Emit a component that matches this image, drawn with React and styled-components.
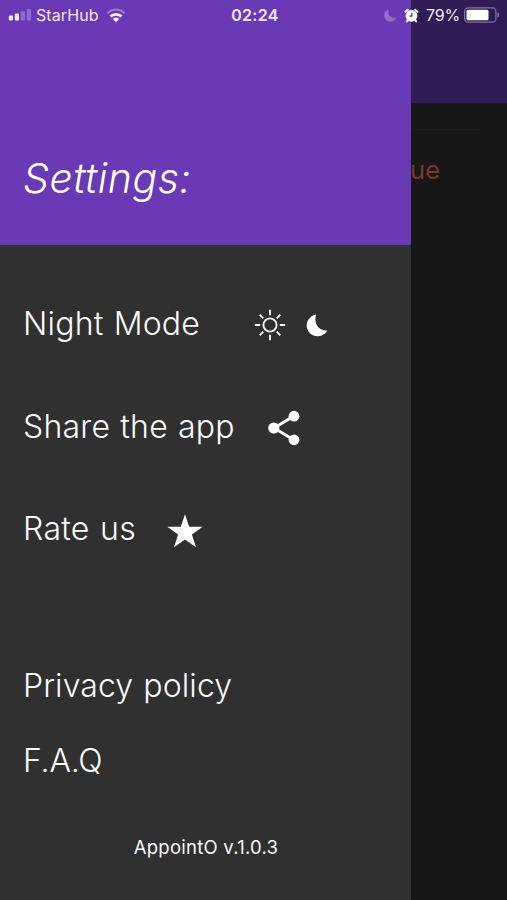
import React from 'react'
import styled, { createGlobalStyle } from 'styled-components'


const GlobalStyle = createGlobalStyle`
  * {
    box-sizing: border-box;
  }

  body {
    margin: 0;
    background: #171717;
    font-family: Inter, "Liberation Sans", sans-serif;
  }
`

const Screen = styled.div`
  position: relative;
  height: 900px;
  overflow: hidden;
  background: #171717;
`

const AppHeader = styled.div`
  height: 103px;
  background: #311b54;
`

const Divider = styled.div`
  height: 1px;
  margin: 26px 27px 0;
  background: #1b1b1b;
`

const Notice = styled.div`
  padding-right: 67px;
  margin-top: 25px;
  font-size: 25.5px;
  line-height: 30px;
  text-align: right;
  color: #793a27;
`

const Drawer = styled.aside`
  position: absolute;
  top: 0;
  left: 0;
  display: flex;
  flex-direction: column;
  width: 411px;
  height: 900px;
  background: #303030;
`

const DrawerHeader = styled.div`
  display: flex;
  align-items: flex-end;
  height: 245px;
  padding: 0 23px 42px;
  background: #6a39b5;
`

const Title = styled.h1`
  margin: 0;
  font-size: 41px;
  font-style: italic;
  font-weight: 320;
  line-height: 50px;
  letter-spacing: ${props => props.$spacing || 0}px;
  color: #fff;
`

const Menu = styled.div`
  padding-top: 28px;
`

const Item = styled.div`
  display: flex;
  align-items: center;
  height: 102.4px;
  padding-left: 23px;
`

const Links = styled.div`
  margin-top: 68px;
`

const LinkItem = styled.div`
  display: flex;
  align-items: center;
  height: 75.4px;
  padding-left: 23px;
`

const Label = styled.span`
  font-size: 32px;
  font-weight: 320;
  line-height: 40px;
  white-space: nowrap;
  letter-spacing: ${props => props.$spacing || 0}px;
  word-spacing: 1px;
  width: ${props => props.$width ? `${props.$width}px` : 'auto'};
  color: #fafafa;
`

const Icon = styled.svg`
  flex: none;
  display: block;
  margin-top: ${props => props.$drop || 0}px;
  margin-left: ${props => props.$gap || 0}px;
`

const Version = styled.div`
  margin-top: 36px;
  padding-left: 1px;
  font-size: 18.5px;
  line-height: 24px;
  letter-spacing: 0.25px;
  text-align: center;
  color: #fafafa;
`

const StatusBar = styled.div`
  position: absolute;
  top: 0;
  left: 0;
  display: grid;
  grid-template-columns: 1fr auto 1fr;
  align-items: center;
  width: 100%;
  height: 30px;
  padding: 0 6px 0 8px;
  font-size: 16px;
  color: #f0e8fb;
`

const StatusSide = styled.div`
  display: flex;
  align-items: center;
  justify-content: ${props => props.$end ? 'flex-end' : 'flex-start'};
`

const StatusText = styled.span`
  margin-left: ${props => props.$gap || 0}px;
  letter-spacing: ${props => props.$spacing || 0}px;
`

const Clock = styled.div`
  padding-left: 1px;
  font-weight: 600;
  letter-spacing: 0.3px;
`

const Signal = () => (
    <Icon width="24" height="12" viewBox="0 0 24 12" fill="#f4edff">
        <rect x="0.8" y="6.5" width="4.2" height="5" rx="1" />
        <rect x="6.8" y="4.5" width="4.2" height="7" rx="1" />
        <rect x="12.8" y="2" width="4.2" height="9.5" rx="1" opacity="0.28" />
        <rect x="18.8" y="0" width="4.2" height="11.5" rx="1" opacity="0.28" />
    </Icon>
)

const Wifi = () => (
    <Icon $gap={7} width="20" height="15" viewBox="0 0 20 15" fill="none" stroke="#f4edff" strokeWidth="2.2">
        <path d="M1.5 5.2a12 12 0 0 1 17 0" opacity="0.35" />
        <path d="M4.5 8.6a7.8 7.8 0 0 1 11 0" strokeWidth="2.8" />
        <path d="M10 14.2l-3.2-3.3a4.6 4.6 0 0 1 6.4 0z" fill="#f4edff" stroke="none" />
    </Icon>
)

const StatusMoon = () => (
    <Icon width="13" height="13" viewBox="0 0 13 13" fill="#9270c8">
        <path d="M4.6 0.5C3.2 5.6 6.7 9.5 12.2 8.7A6.2 6.2 0 1 1 4.6 0.5z" />
    </Icon>
)

const Alarm = () => (
    <Icon $gap={7} width="15" height="15" viewBox="0 0 15 15">
        <circle cx="7.5" cy="7.8" r="5.9" fill="#fff" />
        <path d="M1.5 3.8l2.4-2M13.5 3.8l-2.4-2M3.8 12.2l-1 1.2M11.2 12.2l1 1.2" stroke="#fff" strokeWidth="2" strokeLinecap="round" />
        <path d="M7.8 4.8v3.4H5.4" fill="none" stroke="#4a2a80" strokeWidth="1.2" />
    </Icon>
)

const Battery = () => (
    <Icon $gap={4} width="37" height="16" viewBox="0 0 37 16">
        <rect x="0.6" y="0.8" width="31.3" height="14.4" rx="3.8" fill="none" stroke="#87769f" strokeWidth="1.2" />
        <rect x="2.5" y="2.7" width="22" height="10.6" rx="1.6" fill="#fff" />
        <path d="M33.4 5.3c2.4 1 2.4 4.4 0 5.4z" fill="#87769f" />
    </Icon>
)

const Sun = () => (
    <Icon $gap={3} $drop={2} width="32" height="32" viewBox="-16 -16 32 32" fill="none" stroke="#f5f5f5" strokeWidth="1.9">
        <circle r="6.6" />
        <path d="M0-15.2v5.4M0 9.8v5.4M-15.2 0h5.4M9.8 0h5.4M-10.3-10.3l3.6 3.6M6.7 6.7l3.6 3.6M-10.3 10.3l3.6-3.6M6.7-6.7l3.6-3.6" />
    </Icon>
)

const Moon = () => (
    <Icon $gap={19.5} $drop={2} width="22" height="23" viewBox="0 0 22 23" fill="#fff">
        <path d="M10.2 0.6C7.2 8.7 12.6 17.3 21.3 16.4A10.9 10.9 0 1 1 10.2 0.6z" />
    </Icon>
)

const Share = () => (
    <Icon $drop={3} width="34" height="36" viewBox="0 0 34 36" fill="#fff">
        <path d="M27 6L7 18l20 12" fill="none" stroke="#fff" strokeWidth="3" />
        <circle cx="6.8" cy="18" r="5.6" />
        <circle cx="27" cy="6.2" r="5.4" />
        <circle cx="27" cy="29.8" r="5.4" />
    </Icon>
)

const Star = () => (
    <Icon $drop={5} width="36" height="34" viewBox="0 0 36 34" fill="#fff">
        <path d="M18 0.2l4.2 12.6h13.5L24.9 20.4l4.1 12.9L18 25.4 7 33.3l4.1-12.9L0.3 12.8h13.5z" />
    </Icon>
)

const App = () => {

    return (
        <Screen>
            <GlobalStyle />
            <AppHeader />
            <Divider />
            <Notice>ue</Notice>
            <Drawer>
                <DrawerHeader>
                    <Title $spacing={0.5}>Settings:</Title>
                </DrawerHeader>
                <Menu>
                    <Item>
                        <Label $width={228} $spacing={0.2}>Night Mode</Label>
                        <Sun />
                        <Moon />
                    </Item>
                    <Item>
                        <Label $width={244} $spacing={0.2}>Share the app</Label>
                        <Share />
                    </Item>
                    <Item>
                        <Label $width={144} $spacing={0.3}>Rate us</Label>
                        <Star />
                    </Item>
                </Menu>
                <Links>
                    <LinkItem><Label $spacing={0.1}>Privacy policy</Label></LinkItem>
                    <LinkItem><Label $spacing={-0.2}>F.A.Q</Label></LinkItem>
                </Links>
                <Version>AppointO v.1.0.3</Version>
            </Drawer>
            <StatusBar>
                <StatusSide>
                    <Signal />
                    <StatusText $gap={4} $spacing={0.1}>StarHub</StatusText>
                    <Wifi />
                </StatusSide>
                <Clock>02:24</Clock>
                <StatusSide $end>
                    <StatusMoon />
                    <Alarm />
                    <StatusText $gap={7} $spacing={-0.2}>79%</StatusText>
                    <Battery />
                </StatusSide>
            </StatusBar>
        </Screen>
    )
}

export default App
